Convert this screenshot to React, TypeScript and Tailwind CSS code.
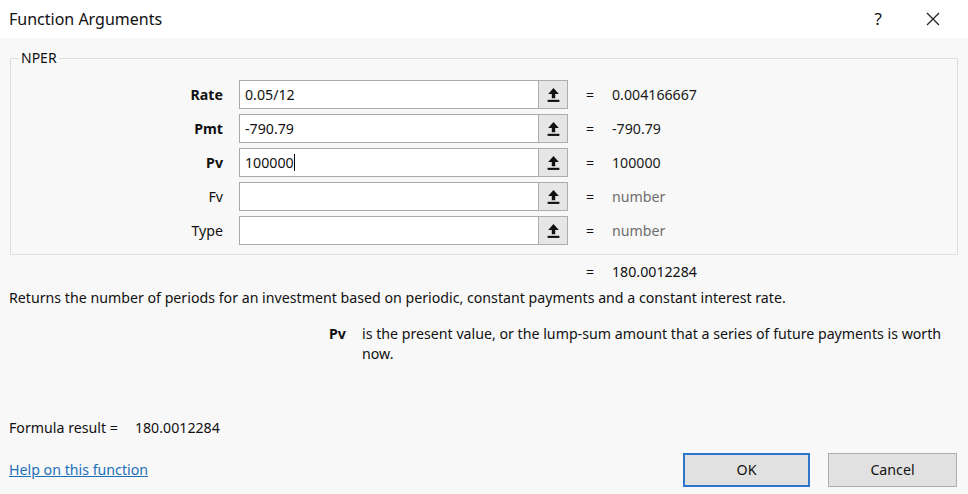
import React from "react";

const rows = [
  { label: "Rate", bold: true, value: "0.05/12", result: "0.004166667", dim: false },
  { label: "Pmt", bold: true, value: "-790.79", result: "-790.79", dim: false },
  { label: "Pv", bold: true, value: "100000", result: "100000", dim: false, caret: true },
  { label: "Fv", bold: false, value: "", result: "number", dim: true },
  { label: "Type", bold: false, value: "", result: "number", dim: true },
];

function RefIcon() {
  return (
    <svg width="13" height="16" viewBox="0 0 12 15">
      <path d="M6 1 L11 6.5 L7.6 6.5 L7.6 10.5 L4.4 10.5 L4.4 6.5 L1 6.5 Z" fill="#111" />
      <rect x="0.5" y="12" width="11" height="2" fill="#111" />
    </svg>
  );
}

function ArgRow(r: any) {
  return (
    <div className="flex items-center h-[29px]">
      <div className={`w-[212px] text-right pr-0 ${r.bold ? "font-bold" : ""}`}>{r.label}</div>
      <div className="ml-[16px] flex h-[29px]">
        <div className="w-[300px] h-full bg-white border border-[#a9a9a9] flex items-center px-[5px]">
          <span>{r.value}</span>
          {r.caret && <span className="inline-block w-px h-[17px] bg-black" />}
        </div>
        <div className="w-[30px] h-full bg-[#e6e6e6] border border-[#adadad] -ml-px flex items-center justify-center">
          <RefIcon />
        </div>
      </div>
      <div className="ml-[18px] w-[26px]">=</div>
      <div className={r.dim ? "text-[#6d6d6d]" : "text-[#1a1a1a]"}>{r.result}</div>
    </div>
  );
}

export default function App() {
  return (
    <div
      className="w-[968px] h-[494px] bg-[#f8f8f8] flex flex-col text-[14.2px] text-[#111] overflow-hidden"
      style={{ fontFamily: '"Noto Sans", "Open Sans", sans-serif' }}
    >
      <div className="h-[38px] bg-white flex items-center pl-[9px] pr-[28px] shrink-0">
        <div className="text-[16px] text-[#111]">Function Arguments</div>
        <div className="ml-auto flex items-center gap-[44px]">
          <span className="text-[17px]">?</span>
          <svg width="14" height="14" viewBox="0 0 14 14">
            <path d="M1 1 L13 13 M13 1 L1 13" stroke="#222" strokeWidth="1.3" />
          </svg>
        </div>
      </div>

      <fieldset className="mx-[10px] mt-[12px] border border-[#dedede] pb-[8px] h-[205px] shrink-0">
        <legend className="ml-[8px] px-[2px] text-[14px] leading-[16px]">NPER</legend>
        <div className="flex flex-col gap-[5px] mt-[14px]">
          {rows.map((r) => (
            <ArgRow key={r.label} {...r} />
          ))}
        </div>
      </fieldset>

      <div className="flex mt-[7px] h-[20px] items-center">
        <div className="ml-[586px] w-[26px]">=</div>
        <div>180.0012284</div>
      </div>

      <div className="pl-[9px] mt-[6px] leading-[20px]">
        Returns the number of periods for an investment based on periodic, constant payments and a constant interest rate.
      </div>

      <div className="flex mt-[16px] leading-[20px]">
        <div className="ml-[329px] w-[33px] font-bold">Pv</div>
        <div className="w-[590px]">
          is the present value, or the lump-sum amount that a series of future payments is worth now.
        </div>
      </div>

      <div className="flex mt-[54px] pl-[9px] h-[20px] items-center">
        <span>Formula result =</span>
        <span className="ml-[17px]">180.0012284</span>
      </div>

      <div className="flex items-center mt-[15px] pl-[9px]">
        <a className="text-[#1e6fb8] underline">Help on this function</a>
        <div className="ml-auto flex gap-[18px] pr-[11px]">
          <button className="w-[127px] h-[34px] bg-[#e1e1e1] border-2 border-[#2f75c9] text-[#111]">OK</button>
          <button className="w-[129px] h-[34px] bg-[#e1e1e1] border border-[#adadad] text-[#111]">Cancel</button>
        </div>
      </div>
    </div>
  );
}
